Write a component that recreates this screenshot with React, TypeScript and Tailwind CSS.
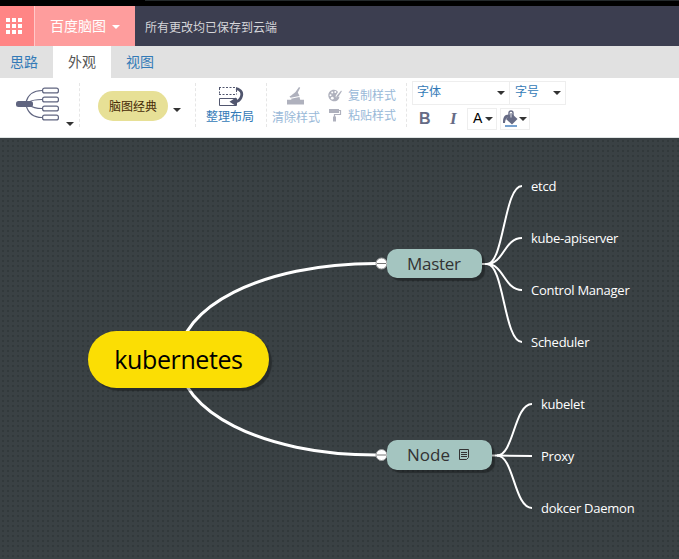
import React from "react";

const CJK = "font-['Noto_Sans_CJK_SC',sans-serif]";

function Caret({ className = "" }: { className?: string }) {
  return (
    <svg className={className} width="8" height="4" viewBox="0 0 8 4">
      <path d="M0 0H8L4 4Z" fill="currentColor" />
    </svg>
  );
}

function Header() {
  return (
    <header className="flex h-10 bg-[#3c3e50] text-white">
      <div className="flex w-[34px] items-center bg-[#ff8585] pl-1.5">
        <div className="grid grid-cols-3 gap-[2px]">
          {Array.from({ length: 9 }, (_, i) => (
            <span key={i} className="size-1 bg-white" />
          ))}
        </div>
      </div>
      <div className="flex w-[101px] items-center border-l border-[#ffc8c8] bg-[#fe9d9d] pl-[15px] text-sm">
        <span className="-mt-0.5">百度脑图</span>
        <Caret className="ml-[6px] mt-0.5" />
      </div>
      <div className="flex items-center pl-2.5 pt-px text-xs text-[#d5d5d9]">所有更改均已保存到云端</div>
    </header>
  );
}

function Tabs() {
  return (
    <nav className="flex h-8 bg-[#e1e1e1] text-sm leading-[31px] text-[#337ab7]">
      <div className="w-[53px] pl-2.5">思路</div>
      <div className="w-[58px] bg-white pl-[15px] text-[#555]">外观</div>
      <div className="pl-[15px]">视图</div>
    </nav>
  );
}

function StructureIcon() {
  return (
    <svg width="44" height="36" viewBox="0 0 44 36" fill="none" stroke="#606580">
      <path d="M10 15C12 8 17 3.500 26 3.500M13 15C17 12.500 20 12.500 26 12.500M13 18C17 21 20 21.500 26 21.500M10 18C12 26 17 30.500 26 30.500" strokeWidth="1.1" />
      <rect x="0" y="14" width="17" height="6" rx="2.500" fill="#606580" stroke="none" />
      {[1, 10, 19, 28].map((y) => (
        <rect key={y} x="26.600" y={y + 0.1} width="15.800" height="4.800" rx="2" strokeWidth="1.200" fill="white" />
      ))}
    </svg>
  );
}

function LayoutIcon() {
  return (
    <svg width="25" height="20" viewBox="0 0 25 20" fill="none" stroke="#51566e">
      <path d="M0 .5H18M0 7.500H18" strokeDasharray="2 1.500" />
      <path d="M.5 1V7M17.500 3V7" strokeDasharray="2 1.500" />
      <path d="M.5 11.500H17.500V18.500H.5Z" />
      <path d="M17 1.500C22 2.500 24 6 22 10.500C21 13 19 14.500 15.500 14.800" strokeWidth="2.800" />
      <path d="M17 10.500V19L10.500 14.800Z" fill="#51566e" stroke="none" />
    </svg>
  );
}

function BroomIcon() {
  return (
    <svg width="18" height="18" viewBox="0 0 18 18" fill="#afb1bd">
      <path d="M12 0L13.200 .8L10.800 5.500L12.500 9L3.500 10.800L2.500 9.500C5 8 6.500 6.500 8.500 5Z" />
      <path d="M4 11.700L12.500 10L13.200 12.800H17V17.500H0V12.800H4.500Z" />
    </svg>
  );
}

function PaletteIcon() {
  return (
    <svg width="14" height="13" viewBox="0 0 14 13">
      <path d="M6 .7C2.500 .7 .3 3.300 .3 6.300C.3 9.700 3 12.300 6.200 12.300C9.500 12.300 11.500 10 11.300 7.500L8 8.500L7.500 7L10 3C9 1.500 7.500 .7 6 .7Z" fill="#afb1bd" />
      <g fill="white">
        <circle cx="4.200" cy="3.500" r="1" />
        <circle cx="7.300" cy="3" r="1" />
        <circle cx="2.500" cy="6.300" r="1" />
        <circle cx="4.300" cy="9.200" r="1.400" />
      </g>
      <path d="M13.200 1.500L9 6.500L7.500 9L10.500 7.500L13.800 2.500Z" fill="#afb1bd" />
    </svg>
  );
}

function RollerIcon() {
  return (
    <svg width="14" height="13" viewBox="0 0 14 13">
      <rect x="1" y="0" width="10" height="4" fill="#afb1bd" />
      <path d="M11 1.500H12.500V5.500H6.500V8" stroke="#afb1bd" fill="none" strokeWidth="1.200" />
      <rect x="5" y="7.500" width="3" height="5" fill="#afb1bd" />
    </svg>
  );
}

function BucketIcon() {
  return (
    <svg width="15" height="18" viewBox="0 0 15 18">
      <path d="M6 6V3Q6 1 8 1Q10 1 10 3V6" fill="none" stroke="#666b85" strokeWidth="1.400" />
      <path d="M8 3L14.500 9L9 14.500L3 9Z" fill="#666b85" />
      <path d="M6 4.500C1 4.500 0 7.500 0 13L2 13C2.500 9.500 3 7.500 6 7Z" fill="#666b85" />
      <path d="M8 4V7.500" stroke="white" strokeWidth=".8" />
      <rect x="2" y="15" width="12" height="2" fill="#76a1cf" />
    </svg>
  );
}

function Toolbar() {
  return (
    <section className="flex h-[60px] border-b border-[#dfe4e4] bg-white text-xs text-[#337ab7]">
      <div className="my-[5px] flex h-11 w-20 border-r border-dashed border-[#e6e6e6] pl-4 pt-1">
        <StructureIcon />
        <Caret className="ml-[6px] mt-[35px] text-[#333]" />
      </div>
      <div className="my-[5px] flex h-11 w-[116px] items-center border-r border-dashed border-[#e6e6e6] pl-[18px]">
        <div className="mt-0.5 flex h-[30px] w-[70px] items-center justify-center rounded-full bg-[#e7e096] pb-px text-[#462b06]">脑图经典</div>
        <Caret className="ml-[5px] mt-2.5 text-[#333]" />
      </div>
      <div className="my-[5px] flex h-11 w-[71px] flex-col items-start border-r border-dashed border-[#e6e6e6] pl-[10px] pt-1">
        <LayoutIconSlot />
        <span className="leading-[18px]">整理布局</span>
      </div>
      <div className="my-[5px] flex h-11 w-[140px] border-r border-dashed border-[#e6e6e6] pl-[5px] text-[#99b9d8]">
        <div className="flex w-12 flex-col items-center pt-1">
          <BroomIcon />
          <span className="mt-[3px] leading-[18px]">清除样式</span>
        </div>
        <div className="ml-2 flex flex-col gap-0.5 pt-[3px]">
          <div className="flex h-[18px] items-center gap-[6px]"><PaletteIcon />复制样式</div>
          <div className="flex h-[18px] items-center gap-[6px]"><RollerIcon />粘贴样式</div>
        </div>
      </div>
      <div className="ml-[5px] pt-[3px]">
        <div className="flex h-6">
          <div className="flex w-[98px] items-center justify-between border border-[#eee] pl-1 pr-1"><span className="-mt-1">字体</span><Caret className="text-[#333]" /></div>
          <div className="flex w-14 items-center justify-between border border-l-0 border-[#eee] pl-[5px] pr-1"><span className="-mt-1">字号</span><Caret className="text-[#333]" /></div>
        </div>
        <div className="mt-[3px] flex h-[22px] items-center font-['Liberation_Sans',sans-serif]">
          <span className="w-[29px] pl-[7px] text-base font-bold leading-[18px] text-[#666b85]">B</span>
          <span className="w-[26px] pl-[9px] font-['Liberation_Serif',serif] text-[17px] font-bold italic leading-[18px] text-[#666b85]">I</span>
          <div className="flex h-[22px] w-[30px] items-center border border-[#eee] pb-px pl-[5px] text-sm text-black"><span className="-mt-0.5">A</span><Caret className="ml-[3px] text-[#333]" /></div>
          <div className="ml-[3px] flex h-[22px] w-[30px] items-center border border-[#eee] pb-px pl-0.5"><BucketIcon /><Caret className="ml-px text-[#333]" /></div>
        </div>
      </div>
    </section>
  );
}

function LayoutIconSlot() {
  return <div className="ml-[13px] h-5"><LayoutIcon /></div>;
}

const leaves = [
  { label: "etcd", pos: "left-[531px] top-[38px]" },
  { label: "kube-apiserver", pos: "left-[531px] top-[90px]" },
  { label: "Control Manager", pos: "left-[531px] top-[142px]" },
  { label: "Scheduler", pos: "left-[531px] top-[194px]" },
  { label: "kubelet", pos: "left-[541px] top-[256px]" },
  { label: "Proxy", pos: "left-[541px] top-[308px]" },
  { label: "dokcer Daemon", pos: "left-[541px] top-[360px]" },
];

function MindMap() {
  return (
    <main className="relative h-[421px] overflow-hidden bg-[#3a4144] font-['Open_Sans',sans-serif]">
      <svg className="absolute inset-0" width="679" height="421" fill="none" stroke="white">
        <defs>
          <pattern id="dots" width="5" height="5" patternUnits="userSpaceOnUse">
            <rect x="2" y="2" width="2" height="2" fill="#32393b" stroke="none" />
          </pattern>
        </defs>
        <rect width="679" height="421" fill="url(#dots)" stroke="none" />
        <g strokeWidth="3">
          <path d="M179 221C179 170 260 125.500 376 125.500" />
          <path d="M179 221C179 272 260 317 376 317" />
        </g>
        <g strokeWidth="2">
          <path d="M482 126H487C504 126 504 48 522 48" />
          <path d="M487 126C504 126 504 100 522 100" />
          <path d="M487 126C504 126 504 152 522 152" />
          <path d="M487 126C504 126 504 204 522 204" />
          <path d="M492 317.500H497C514 317.500 514 266 532 266" />
          <path d="M497 317.500L532 318" />
          <path d="M497 317.500C514 317.500 514 370 532 370" />
        </g>
        {[125.5, 317].map((y) => (
          <g key={y}>
            <circle cx="381.500" cy={y} r="5.500" fill="white" stroke="#9a9c9d" strokeWidth="1" />
            <path d={`M377 ${y}H386`} stroke="#777" />
          </g>
        ))}
      </svg>
      <div className="absolute left-[88px] top-[193px] flex h-[57px] w-[181px] items-center justify-center rounded-full bg-[#fbde04] pt-px text-[25px] tracking-[-0.4px] text-black shadow-[3px_3px_1px_#0000004d]">kubernetes</div>
      <div className="absolute left-[387px] top-[111px] flex h-[29px] w-[95px] items-center rounded-[10px] bg-[#a4c5c0] pl-[20px] text-[17px] tracking-[-0.3px] text-[#333] shadow-[3px_3px_1px_#0000004d]">Master</div>
      <div className="absolute left-[387px] top-[302px] flex h-[30px] w-[105px] items-center rounded-[10px] bg-[#a4c5c0] pl-[20px] text-[17px] text-[#333] shadow-[3px_3px_1px_#0000004d]">
        Node
        <svg className="-mt-px ml-[9px]" width="10" height="11" viewBox="0 0 10 11" fill="none" stroke="#333">
          <path d="M.5 .5H9.500V8.500L7.500 10.500H.5ZM2 3.500H8M2 5.500H8M2 7.500H8" />
        </svg>
      </div>
      {leaves.map((leaf) => (
        <div key={leaf.label} className={`absolute whitespace-nowrap text-[13px] font-medium leading-5 tracking-[-0.25px] text-white ${leaf.pos}`}>{leaf.label}</div>
      ))}
    </main>
  );
}

export default function App() {
  return (
    <div className={`h-[559px] w-[679px] overflow-hidden ${CJK}`}>
      <div className="flex h-1.5 justify-end bg-black"><div className="h-px w-[534px] bg-[#24292b]" /></div>
      <Header />
      <Tabs />
      <Toolbar />
      <MindMap />
    </div>
  );
}
